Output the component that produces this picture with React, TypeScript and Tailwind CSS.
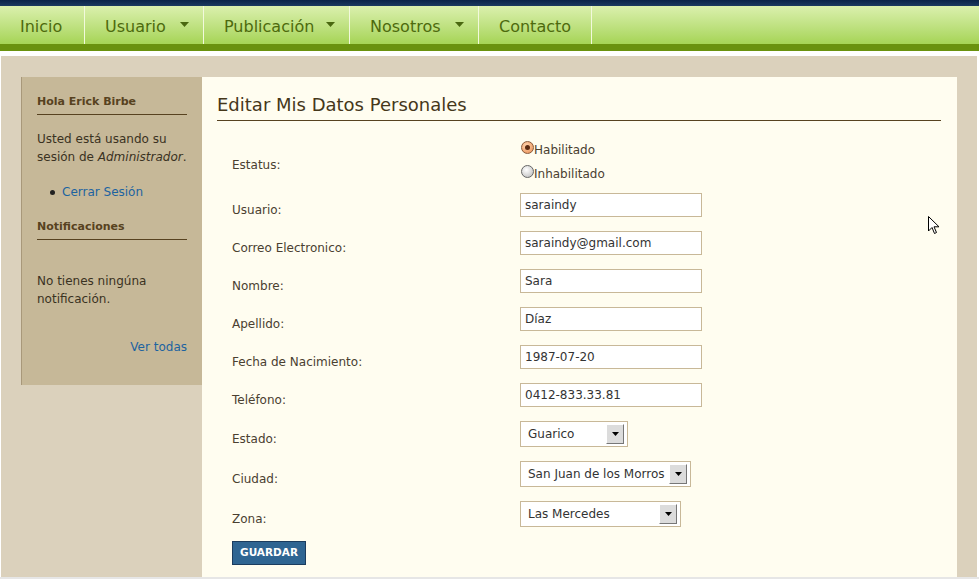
import React from "react";

function Arrow() {
  return (
    <svg width="9" height="5" viewBox="0 0 9 5" className="mb-[4px]">
      <polygon points="0,0 9,0 4.5,5" fill="#4a6810" />
    </svg>
  );
}

function NavItem({ label, w, arrow }: { label: string; w: string; arrow?: boolean }) {
  return (
    <div className={`${w} h-full flex items-center justify-between pl-[20px] pr-[14px] pt-[3px] border-r border-[#f2f9dc]`}>
      <span>{label}</span>
      {arrow && <Arrow />}
    </div>
  );
}

function TextRow({ label, value }: { label: string; value: string }) {
  return (
    <div className="flex items-start h-[24px]">
      <div className="w-[288px] pt-[9px] leading-[16px]">{label}</div>
      <div className="w-[182px] h-[24px] border border-[#c8b898] bg-white px-[4px] flex items-center text-[12px] text-[#333]">
        {value}
      </div>
    </div>
  );
}

function SelectRow({ label, value, w }: { label: string; value: string; w: string }) {
  return (
    <div className="flex items-start h-[26px]">
      <div className="w-[288px] pt-[10px] leading-[16px]">{label}</div>
      <div className={`${w} h-[26px] border border-[#c8b898] bg-white pl-[7px] pr-[3px] flex items-center justify-between text-[12px] text-[#333]`}>
        <span className="whitespace-nowrap">{value}</span>
        <div className="w-[18px] h-[20px] bg-[#dcdcdc] border-t border-l border-t-white border-l-white border-b border-r border-b-[#777] border-r-[#777] flex items-center justify-center shrink-0">
          <svg width="7" height="4" viewBox="0 0 7 4">
            <polygon points="0,0 7,0 3.5,4" fill="#000" />
          </svg>
        </div>
      </div>
    </div>
  );
}

function Radio({ checked }: { checked?: boolean }) {
  return checked ? (
    <span className="w-[13px] h-[13px] rounded-full border border-[#8a5a3a] bg-[radial-gradient(circle_at_40%_35%,#ffd6b0,#e88a50)] flex items-center justify-center mb-[5px]">
      <span className="w-[5px] h-[5px] rounded-full bg-[#5a2a10]" />
    </span>
  ) : (
    <span className="w-[13px] h-[13px] rounded-full border border-[#666] bg-[radial-gradient(circle_at_40%_35%,#ffffff,#b8b8b8)] mb-[5px]" />
  );
}

export default function App() {
  return (
    <div className="w-[979px] h-[579px] bg-white overflow-hidden relative font-['DejaVu_Sans',sans-serif]">
      <div className="h-[6px] bg-linear-to-b from-[#0a2347] to-[#1b3a60]" />
      <nav className="h-[38px] bg-linear-to-b from-[#dbf0ad] to-[#a6d454] flex text-[16px] text-[#4d6a0d]">
        <NavItem label="Inicio" w="w-[85px]" />
        <NavItem label="Usuario" w="w-[119px]" arrow />
        <NavItem label="Publicación" w="w-[146px]" arrow />
        <NavItem label="Nosotros" w="w-[129px]" arrow />
        <NavItem label="Contacto" w="w-[113px]" />
      </nav>
      <div className="h-[7px] bg-[#6a920e]" />
      <div className="h-[5px] bg-white" />
      <div className="ml-[1px] mr-[2px] h-[521px] bg-[#dbd1bc] flex pl-[20px] pt-[21px] pr-[20px]">
        <aside className="w-[181px] self-start bg-[#c6b898] border-l border-[#a8987a] pl-[15px] pr-[15px] pt-[17px] pb-[29px] text-[12px] text-[#3a3222]">
          <div className="text-[11px] font-bold leading-[16px] text-[#574220] pb-[4px] border-b border-[#574220]">
            Hola Erick Birbe
          </div>
          <p className="mt-[15px] leading-[18px]">
            Usted está usando su sesión de <i>Administrador</i>.
          </p>
          <ul className="mt-[17px] leading-[18px] pl-[13px]">
            <li className="flex items-center">
              <span className="w-[5px] h-[5px] rounded-full bg-[#222] mr-[7px]" />
              <span className="text-[#1c63a0]">Cerrar Sesión</span>
            </li>
          </ul>
          <div className="mt-[18px] text-[11px] font-bold leading-[16px] text-[#574220] pb-[4px] border-b border-[#574220]">
            Notificaciones
          </div>
          <p className="mt-[32px] leading-[18px]">No tienes ningúna notificación.</p>
          <div className="mt-[30px] leading-[18px] text-right text-[#1c63a0]">Ver todas</div>
        </aside>
        <main className="flex-1 bg-[#fffdf0] pl-[15px] pr-[16px] pt-[17px]">
          <h1 className="text-[18px] leading-[22px] text-[#45371a] pb-[4px] border-b border-[#574220]">
            Editar Mis Datos Personales
          </h1>
          <div className="pl-[15px] text-[12px] text-[#4a4030]">
            <div className="flex items-start mt-[17px]">
              <div className="w-[288px] pt-[19px] leading-[16px]">Estatus:</div>
              <div className="flex flex-col pl-[1px]">
                <label className="h-[24px] flex items-center">
                  <Radio checked />
                  <span>Habilitado</span>
                </label>
                <label className="h-[24px] flex items-center">
                  <Radio />
                  <span>Inhabilitado</span>
                </label>
              </div>
            </div>
            <div className="mt-[7px] flex flex-col gap-[14px]">
              <TextRow label="Usuario:" value="saraindy" />
              <TextRow label="Correo Electronico:" value="saraindy@gmail.com" />
              <TextRow label="Nombre:" value="Sara" />
              <TextRow label="Apellido:" value="Díaz" />
              <TextRow label="Fecha de Nacimiento:" value="1987-07-20" />
              <TextRow label="Teléfono:" value="0412-833.33.81" />
              <SelectRow label="Estado:" value="Guarico" w="w-[108px]" />
              <SelectRow label="Ciudad:" value="San Juan de los Morros" w="w-[171px]" />
              <SelectRow label="Zona:" value="Las Mercedes" w="w-[161px]" />
              <div>
                <button className="w-[74px] h-[24px] bg-[#2f6592] border border-[#1b3c5e] text-white text-[10.5px] font-bold flex items-center justify-center">
                  GUARDAR
                </button>
              </div>
            </div>
          </div>
        </main>
      </div>
      <div className="h-[2px] bg-[#e6e6e6]" />
      <svg className="absolute left-[928px] top-[216px]" width="12" height="19" viewBox="0 0 12 19">
        <path d="M0.5,0.5 L0.5,15 L4,11.5 L6.5,17.5 L8.5,16.5 L6,10.8 L11,10.8 Z" fill="#fff" stroke="#000" strokeWidth="1" strokeLinejoin="round" />
      </svg>
    </div>
  );
}
